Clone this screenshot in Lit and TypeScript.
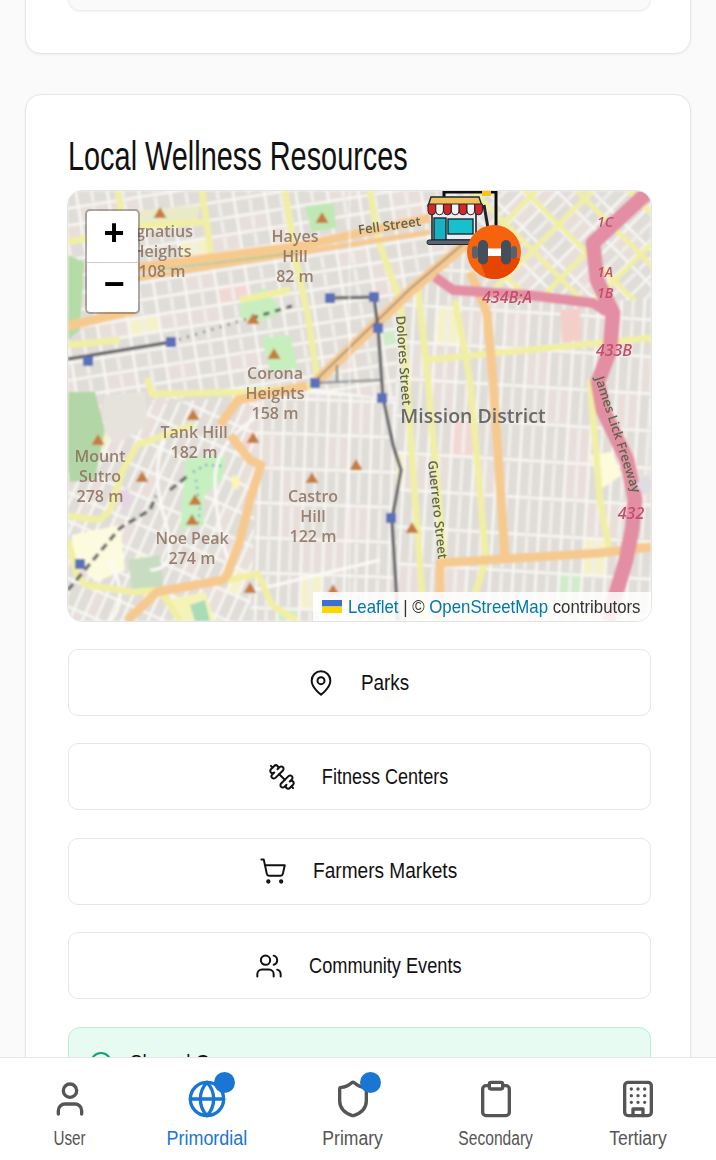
import { LitElement, html, css, svg } from "lit";
import { customElement } from "lit/decorators.js";

const rnd = (i: number) => {
  const v = Math.sin(i * 12.9898) * 43758.5453;
  return v - Math.floor(v);
};

interface Region { id: string; poly: string; ang: number; cx: number; cy: number; w: number; h: number; seed: number; }

const regions: Region[] = [
  { id: "rn", poly: "68,191 436,191 470,240 400,300 395,400 315,388 150,405 68,405", ang: -9, cx: 250, cy: 300, w: 31, h: 17, seed: 11 },
  { id: "rm", poly: "400,300 470,240 490,300 651,300 651,621 398,621 395,400", ang: 3.5, cx: 520, cy: 460, w: 23, h: 37, seed: 73 },
  { id: "re", poly: "436,191 651,191 651,300 490,300 470,240", ang: 45, cx: 540, cy: 245, w: 25, h: 25, seed: 131 },
  { id: "rs", poly: "260,390 395,400 398,621 250,621", ang: 2, cx: 325, cy: 505, w: 22, h: 35, seed: 197 },
  { id: "rw", poly: "68,400 260,390 250,621 68,621", ang: 24, cx: 160, cy: 505, w: 12, h: 26, seed: 241 },
];

const blockFill = (r: number) =>
  r > 0.975 ? "#f2d8d5" : r > 0.955 ? "#f5f1cb" : r > 0.94 ? "#d2ebcb" : r > 0.8 ? "#e8dfdb" : "#e0ddd8";

const gridFor = (g: Region) => {
  const cells = [];
  const nx = Math.ceil(440 / g.w);
  const ny = Math.ceil(440 / g.h);
  for (let i = -nx; i <= nx; i++) {
    for (let j = -ny; j <= ny; j++) {
      const x = g.cx + i * g.w;
      const y = g.cy + j * g.h;
      const r = rnd(i * 31 + j * 7 + g.seed);
      cells.push(svg`<rect x=${x + 1.3} y=${y + 1.3} width=${g.w - 2.6} height=${g.h - 2.6} fill=${blockFill(r)}></rect>`);
      if (g.w > 15) {
        cells.push(svg`<rect x=${x + g.w / 2 - 1.6} y=${y + 2.5} width="3.2" height=${g.h - 5} fill="#f1efeb"></rect>`);
      }
    }
  }
  return svg`<clipPath id=${g.id}><polygon points=${g.poly}></polygon></clipPath>
    <g clip-path=${`url(#${g.id})`}><g transform=${`rotate(${g.ang} ${g.cx} ${g.cy})`}>${cells}</g></g>`;
};

const yellow = [
  "M118 191 L126 250", "M202 191 L212 262", "M285 191 L296 262 L308 316 L318 384",
  "M68 242 L118 232", "M140 226 L205 222", "M240 300 L290 290",
  "M370 191 L378 240 L400 300 L408 400 L424 621",
  "M417 280 L428 380 L444 563", "M455 300 L470 380 L486 560 L466 621",
  "M590 380 L600 500 L610 553", "M425 360 L651 338", "M68 345 L120 340",
  "M147 378 L152 394 L247 392 L312 386",
  "M193 425 L137 445 L123 470 L110 510 L100 520 L68 516",
  "M68 540 L77 575 L86 585 L133 592 L160 590", "M227 580 L258 574 L272 605 L297 621",
  "M160 590 L180 621",
];

const diag = [0, 1, 2, 3, 4, 5];

const orange = [
  "M135 268 L300 246 L430 218", "M68 326 L135 310",
  "M307 386 L238 400 L220 425", "M230 435 L250 460 L261 465 L250 500 L240 540 L227 575 L223 580 L157 592 L127 621",
  "M470 272 L487 313 L493 380 L505 557", "M440 621 L440 563 L600 553 L651 547",
];

const pink = [
  "M647 193 L593 243 L597 280 L613 313 L610 350 L598 382 L603 410 L627 460 L635 500 L632 530 L626 560 L617 590 L608 621",
  "M435 277 L453 290 L527 295 L593 303 L607 312",
];

const stops: [number, number][] = [
  [88, 361], [171, 342], [330, 298], [374, 297], [378, 328], [315, 383], [382, 398], [391, 518], [80, 564],
];

const peaks: [number, number][] = [
  [160, 213], [322, 218], [98, 440], [193, 415], [253, 438], [142, 477], [195, 500], [192, 520],
  [312, 478], [356, 465], [250, 588], [333, 590], [412, 528], [253, 319], [274, 354],
];

const hills: [number, number, string[]][] = [
  [162, 237, ["Ignatius", "Heights", "108 m"]],
  [295, 242, ["Hayes", "Hill", "82 m"]],
  [275, 379, ["Corona", "Heights", "158 m"]],
  [194, 438, ["Tank Hill", "182 m"]],
  [100, 462, ["Mount", "Sutro", "278 m"]],
  [313, 502, ["Castro", "Hill", "122 m"]],
  [192, 544, ["Noe Peak", "274 m"]],
];

const mapArt = svg`
  <rect x="68" y="191" width="583" height="430" fill="#f8f7f3"></rect>
  <g filter="url(#soft)">
    ${regions.map(gridFor)}
    <path d="M68 392 L95 392 L105 430 L95 480 L70 482 L68 470Z" fill="#b3d6a6"></path>
    <path d="M105 395 L145 392 L148 425 L115 445 L104 430Z" fill="#e6e3dc"></path>
    <path d="M68 255 L84 262 L80 330 L68 340Z" fill="#b4dca6"></path>
    <path d="M305 206 L334 203 L336 228 L312 232Z" fill="#bfe8b4"></path>
    <path d="M125 212 L200 205 L196 225 L130 228Z" fill="#e9ebc8"></path>
    <path d="M240 300 L265 288 L283 312 L262 322 L240 318Z" fill="#c8eec0"></path>
    <path d="M262 338 L290 335 L298 368 L270 372Z" fill="#c6efbd"></path>
    <path d="M186 458 L226 456 L222 480 L204 496 L204 525 L180 530 Z" fill="#c6f0c0"></path>
    <path d="M232 475 L240 478 L238 490 L232 488Z" fill="#fdf5b0"></path>
    <path d="M72 535 L120 525 L125 570 L95 582 L72 556Z" fill="#fdfbdf"></path>
    <path d="M128 560 L160 555 L164 590 L132 590Z" fill="#c8dcc2"></path>
    <path d="M165 600 L205 592 L215 621 L180 621Z" fill="#f6f3b8"></path>
    <path d="M190 605 L205 600 L210 621 L195 621Z" fill="#a8dcb8"></path>
    <path d="M118 492 L128 488 L132 505 L122 508Z" fill="#e6d4e6"></path>
    <path d="M590 455 L612 452 L622 475 L600 490Z" fill="#fcfbdc"></path>
    <path d="M560 310 L580 308 L582 340 L562 342Z" fill="#f4cfca"></path>
    <path d="M265 412 Q215 440 215 480 T228 560 M165 440 Q150 470 165 520 T150 570 M110 560 Q130 600 110 621 M255 590 L380 560"
      fill="none" stroke="#faf9f6" stroke-width="3"></path>
    <g clip-path="url(#re)">
      ${diag.map((i) => svg`<path d=${`M${400 + i * 52} 170 L${620 + i * 52} 390`} fill="none" stroke="#f1efa3" stroke-width="5"></path>`)}
      ${diag.map((i) => svg`<path d=${`M${445 + i * 56} 170 L${245 + i * 56} 370`} fill="none" stroke="#f1efa3" stroke-width="5"></path>`)}
    </g>
    ${yellow.map((d) => svg`<path d=${d} fill="none" stroke="#f1efa3" stroke-width="6.5" stroke-linejoin="round"></path>`)}
    ${orange.map((d) => svg`<path d=${d} fill="none" stroke="#f6c98f" stroke-width="9" stroke-linejoin="round"></path>`)}
    <path d="M135 279 L430 232" fill="none" stroke="#f6c98f" stroke-width="5"></path>
    <path d="M160 270 L300 252" fill="none" stroke="#a6c686" stroke-width="1.5"></path>
    <path d="M316 382 L410 291 L470 240" fill="none" stroke="#f6c98f" stroke-width="11"></path>
    <path d="M316 380 L410 289 L470 238" fill="none" stroke="#8a8378" stroke-width="1.6"></path>
    ${pink.map((d, i) => svg`<path d=${d} fill="none" stroke="#e38ea3" stroke-width=${i === 0 ? 15 : 10} stroke-linejoin="round"></path>`)}
    <path d="M640 490 L651 480" stroke="#e0dce4" stroke-width="14"></path>
    <path d="M68 359 L171 342" fill="none" stroke="#55565a" stroke-width="3"></path>
    <path d="M171 342 L250 318" fill="none" stroke="#66676b" stroke-width="3" stroke-dasharray="1.5 7"></path>
    <path d="M252 318 L292 306" fill="none" stroke="#55565a" stroke-width="3" stroke-dasharray="6 6"></path>
    <path d="M330 298 L374 297 L378 328 L383 398 L393 445 L401 470 L392 520 L398 621" fill="none" stroke="#5f6064" stroke-width="3.2" stroke-linejoin="round"></path>
    <path d="M315 383 L380 380 M337 365 L337 383" fill="none" stroke="#85858a" stroke-width="2.2"></path>
    <path d="M68 590 L120 528 L150 510 L156 496 M170 490 L190 474" fill="none" stroke="#66676b" stroke-width="3.4" stroke-dasharray="8 5"></path>
    <path d="M193 472 L206 465 L222 466" fill="none" stroke="#6a80c0" stroke-width="2" stroke-dasharray="2 5"></path>
    <path d="M196 480 L200 510 L198 525" fill="none" stroke="#6a90d0" stroke-width="2" stroke-dasharray="2 5"></path>
    ${stops.map(([x, y]) => svg`<rect x=${x - 5} y=${y - 5} width="10" height="10" fill="#5a70b8"></rect>`)}
    ${peaks.map(([x, y]) => svg`<path d=${`M${x} ${y - 6} L${x + 6.5} ${y + 5} L${x - 6.5} ${y + 5}Z`} fill="#c67b3e"></path>`)}
    <rect x="349" y="191" width="1" height="430" fill="#fff" opacity="0.8"></rect>
  </g>
  <g filter="url(#softer)">
    ${hills.map(([x, y0, lines]) => svg`${lines.map((t, n) => svg`<text x=${x} y=${y0 + n * 20} text-anchor="middle" class="hill">${t}</text>`)}`)}
    <text x="473" y="423" text-anchor="middle" class="district">Mission District</text>
    <text transform="translate(390 230) rotate(-8)" text-anchor="middle" class="road">Fell Street</text>
    <text transform="translate(396 316) rotate(86)" class="road">Dolores Street</text>
    <text transform="translate(428 461) rotate(84)" class="road">Guerrero Street</text>
    <text transform="translate(595 378) rotate(72)" class="road">James Lick Freeway</text>
    <text x="507" y="303" text-anchor="middle" class="exit">434B;A</text>
    <text x="597" y="227" class="exit small">1C</text>
    <text x="597" y="277" class="exit small">1A</text>
    <text x="597" y="298" class="exit small">1B</text>
    <text x="614" y="356" text-anchor="middle" class="exit">433B</text>
    <text x="631" y="519" text-anchor="middle" class="exit">432</text>
  </g>
  <g filter="url(#softer)">
    <path d="M444 225 V192 H496 V232" fill="none" stroke="#111" stroke-width="3"></path>
    <rect x="482" y="191" width="9" height="5" fill="#f5c518"></rect>
    <path d="M484 205 L488 228 H486" fill="none" stroke="#222" stroke-width="3"></path>
    <rect x="432" y="210" width="44" height="30" fill="#e9eef2" stroke="#1d2730" stroke-width="1.6"></rect>
    <rect x="434" y="218" width="12" height="22" fill="#14b3c4" stroke="#1d2730" stroke-width="1.4"></rect>
    <rect x="448" y="219" width="25" height="15" fill="#14c0cc" stroke="#1d2730" stroke-width="1.4"></rect>
    <rect x="427" y="240" width="55" height="4.5" rx="2" fill="#5b6470" stroke="#1d2730" stroke-width="1"></rect>
    <path d="M431 197 H479 L482 206 H428Z" fill="#f2c15c" stroke="#1d2730" stroke-width="1.4"></path>
    ${[0, 1, 2, 3, 4, 5, 6].map((i) => svg`<path d=${`M${428 + i * 7.8} 204 h7.6 v7 a3.8 3.8 0 0 1 -7.6 0z`} fill=${i % 2 ? "#f6f3ee" : "#d7262b"} stroke="#1d2730" stroke-width="1"></path>`)}
    <circle cx="494" cy="252" r="27" fill="#f7640f"></circle>
    <path d="M478 256 H512 L520 259 A27 27 0 0 1 494 279 A27 27 0 0 1 486 277.5Z" fill="#e64400"></path>
    <rect x="474" y="248.5" width="42" height="7.5" rx="1" fill="#fff"></rect>
    <rect x="478" y="240" width="10" height="24.5" rx="5" fill="#454f5b"></rect>
    <rect x="501" y="240" width="10" height="24.5" rx="5" fill="#454f5b"></rect>
    <rect x="472" y="246" width="6" height="12.5" rx="3" fill="#57626e"></rect>
    <rect x="511" y="246" width="6" height="12.5" rx="3" fill="#57626e"></rect>
  </g>
`;

const navItems = [
  { label: "User", w: 40, tw: 32, s: 0.78, active: false, badge: false, icon: svg`<path d="M19 21v-2a4 4 0 0 0-4-4H9a4 4 0 0 0-4 4v2"></path><circle cx="12" cy="7" r="4"></circle>` },
  { label: "Primordial", w: 81, tw: 81, s: 0.92, active: true, badge: true, icon: svg`<circle cx="12" cy="12" r="10"></circle><path d="M12 2a14.5 14.5 0 0 0 0 20 14.5 14.5 0 0 0 0-20"></path><path d="M2 12h20"></path>` },
  { label: "Primary", w: 60, tw: 60, s: 0.9, active: false, badge: true, icon: svg`<path d="M20 13c0 5-3.5 7.5-7.66 8.95a1 1 0 0 1-.67-.01C7.5 20.5 4 18 4 13V6a1 1 0 0 1 1-1c2 0 4.5-1.2 6.24-2.72a1.17 1.17 0 0 1 1.52 0C14.51 3.81 17 5 19 5a1 1 0 0 1 1 1z"></path>` },
  { label: "Secondary", w: 74, tw: 74, s: 0.8, active: false, badge: false, icon: svg`<rect x="8" y="2" width="8" height="4" rx="1"></rect><path d="M16 4h2a2 2 0 0 1 2 2v14a2 2 0 0 1-2 2H6a2 2 0 0 1-2-2V6a2 2 0 0 1 2-2h2"></path>` },
  { label: "Tertiary", w: 58, tw: 58, s: 0.9, active: false, badge: false, icon: svg`<rect x="4" y="2" width="16" height="20" rx="2"></rect><path d="M9 22v-4h6v4"></path><path d="M8 6h.01M12 6h.01M16 6h.01M8 10h.01M12 10h.01M16 10h.01M8 14h.01M12 14h.01M16 14h.01"></path>` },
];

const resources = [
  { label: "Parks", tw: 48, s: 0.857, icon: svg`<path d="M20 10c0 6-8 12-8 12s-8-6-8-12a8 8 0 0 1 16 0Z"></path><circle cx="12" cy="10" r="3"></circle>` },
  { label: "Fitness Centers", tw: 126, s: 0.82, icon: svg`<path d="M14.4 14.4 9.6 9.6"></path><path d="M18.657 21.485a2 2 0 1 1-2.829-2.828l-1.767 1.768a2 2 0 1 1-2.829-2.829l6.364-6.364a2 2 0 1 1 2.829 2.829l-1.768 1.767a2 2 0 1 1 2.828 2.829z"></path><path d="m21.5 21.5-1.4-1.4"></path><path d="M3.9 3.9 2.5 2.5"></path><path d="M6.404 12.768a2 2 0 1 1-2.829-2.829l1.768-1.767a2 2 0 1 1-2.828-2.829l2.828-2.828a2 2 0 1 1 2.829 2.828l1.767-1.768a2 2 0 1 1 2.829 2.829z"></path>` },
  { label: "Farmers Markets", tw: 144, s: 0.867, icon: svg`<circle cx="8" cy="21" r="1"></circle><circle cx="19" cy="21" r="1"></circle><path d="M2.05 2.05h2l2.66 12.42a2 2 0 0 0 2 1.58h9.78a2 2 0 0 0 1.95-1.57l1.65-7.43H5.12"></path>` },
  { label: "Community Events", tw: 152, s: 0.826, icon: svg`<path d="M16 21v-2a4 4 0 0 0-4-4H6a4 4 0 0 0-4 4v2"></path><circle cx="9" cy="7" r="4"></circle><path d="M22 21v-2a4 4 0 0 0-3-3.87"></path><path d="M16 3.13a4 4 0 0 1 0 7.75"></path>` },
];

@customElement("app-root")
export class AppRoot extends LitElement {
  static styles = css`
    :host {
      display: block;
      position: relative;
      height: 1160px;
      overflow: hidden;
      background: #fafafa;
      color: #111;
      font-family: "Liberation Sans", sans-serif;
    }
    .page { display: flex; flex-direction: column; gap: 40px; margin-top: -62px; padding: 0 25px; }
    .card {
      background: #fff;
      border: 1px solid #e6e6e6;
      border-radius: 16px;
      box-shadow: 0 1px 3px rgba(0, 0, 0, 0.05);
      padding: 41px 39px 42px 42px;
    }
    .inner {
      height: 29px;
      background: #fafafa;
      border: 1px solid #eee;
      border-radius: 12px;
      box-shadow: 0 1px 2px rgba(0, 0, 0, 0.05);
    }
    h2 {
      font-size: 40px;
      font-weight: 400;
      line-height: 40px;
      margin: 0 0 15px;
      white-space: nowrap;
      transform: scaleX(0.722);
      transform-origin: left center;
    }
    .fit { display: inline-flex; justify-content: center; flex: none; }
    .fit > span { flex: none; white-space: nowrap; }
    .map {
      position: relative;
      height: 430px;
      border-radius: 14px;
      overflow: hidden;
      outline: 1px solid #e3e3e3;
      margin-bottom: 28px;
    }
    .map > svg { display: block; width: 100%; height: 100%; }
    .hill { font: 600 16px "Open Sans", sans-serif; fill: #8b6f5d; opacity: 0.85; }
    .district { font: 600 19.5px "Open Sans", sans-serif; fill: #6a6a6a; }
    .road { font: 600 13px "Open Sans", sans-serif; fill: #5f6650; }
    .exit { font: italic 600 16px "Open Sans", sans-serif; fill: #c2506b; }
    .small { font-size: 14px; }
    .zoom {
      position: absolute;
      left: 17px;
      top: 18px;
      width: 51px;
      border: 2px solid rgba(0, 0, 0, 0.28);
      border-radius: 5px;
      background: #fff;
      background-clip: padding-box;
    }
    .zoom div {
      box-sizing: border-box;
      height: 50.5px;
      padding: 0 0 7px 3px;
      display: flex;
      align-items: center;
      justify-content: center;
      font: 700 36px "Liberation Sans", sans-serif;
      color: #000;
    }
    .zoom div + div { border-top: 1px solid #ccc; }
    .attr {
      position: absolute;
      right: 0;
      bottom: 0;
      width: 338px;
      box-sizing: border-box;
      height: 29px;
      padding: 0 11px 0 9px;
      display: flex;
      align-items: center;
      justify-content: space-between;
      background: rgba(255, 255, 255, 0.85);
      font-size: 19px;
      color: #333;
    }
    .flag { width: 20px; height: 13px; flex: none; }
    .attr a { color: #0078a8; text-decoration: none; }
    .list { display: flex; flex-direction: column; gap: 27.4px; }
    .btn {
      height: 67px;
      box-sizing: border-box;
      border: 1px solid #e6e6e6;
      border-radius: 10px;
      background: #fff;
      display: flex;
      align-items: center;
      justify-content: center;
      gap: 27px;
      padding-right: 3px;
      font-size: 22px;
      color: #111;
    }
    .btn svg { width: 28px; height: 28px; fill: none; stroke: #111; stroke-width: 1.7; stroke-linecap: round; stroke-linejoin: round; flex: none; }
    .note {
      margin-top: 28px;
      height: 120px;
      box-sizing: border-box;
      border: 1px solid #b9eedb;
      border-radius: 12px;
      background: #e8fbf3;
      padding: 19px 20px;
      display: flex;
      align-items: flex-start;
      gap: 17px;
      font-size: 22px;
    }
    .note svg { width: 24px; height: 24px; fill: none; stroke: #10a37a; stroke-width: 2; flex: none; margin-top: 4px; }
    .note span { padding-top: 3px; transform: scaleX(0.85); transform-origin: left center; white-space: nowrap; }
    nav {
      position: absolute;
      left: 0;
      right: 0;
      bottom: 0;
      height: 103px;
      box-sizing: border-box;
      background: #fff;
      border-top: 1px solid #e6e6e6;
      display: flex;
      justify-content: space-between;
      padding: 21px 49px 0 50px;
    }
    .item {
      position: relative;
      display: flex;
      flex-direction: column;
      align-items: center;
      gap: 7px;
      color: #555;
      font-size: 19.5px;
      line-height: 24px;
    }
    .item.on { color: #1976d2; }
    .item svg { width: 40px; height: 40px; fill: none; stroke: currentColor; stroke-width: 2; stroke-linecap: round; stroke-linejoin: round; }
    .dot {
      position: absolute;
      top: -7px;
      left: 50%;
      margin-left: 7px;
      width: 21px;
      height: 21px;
      border-radius: 50%;
      background: #1976d2;
    }
  `;

  private fit(label: string, tw: number, s: number) {
    return html`<span class="fit" style="width:${tw}px"><span style="transform:scaleX(${s})">${label}</span></span>`;
  }

  render() {
    return html`
      <div class="page">
        <section class="card"><div class="inner"></div></section>
        <section class="card">
          <h2>Local Wellness Resources</h2>
          <div class="map">
            <svg viewBox="68 191 583 430" preserveAspectRatio="none">
              <defs>
                <filter id="soft" x="0" y="0" width="100%" height="100%"><feGaussianBlur stdDeviation="0.85"></feGaussianBlur></filter>
                <filter id="softer" x="-5%" y="-5%" width="110%" height="110%"><feGaussianBlur stdDeviation="0.45"></feGaussianBlur></filter>
              </defs>
              ${mapArt}
            </svg>
            <div class="zoom"><div>+</div><div>−</div></div>
            <div class="attr">
              <svg class="flag" viewBox="0 0 20 13"><rect width="20" height="6.5" fill="#3b6fd0"></rect><rect y="6.5" width="20" height="6.5" fill="#ffd500"></rect></svg>
              <span class="fit" style="width:292px"><span style="transform:scaleX(0.885)"><a>Leaflet</a> | © <a>OpenStreetMap</a> contributors</span></span>
            </div>
          </div>
          <div class="list">
            ${resources.map((r) => html`<div class="btn"><svg viewBox="0 0 24 24">${r.icon}</svg>${this.fit(r.label, r.tw, r.s)}</div>`)}
          </div>
          <div class="note">
            <svg viewBox="0 0 24 24"><circle cx="12" cy="12" r="10"></circle></svg>
            <span>Shared Groups</span>
          </div>
        </section>
      </div>
      <nav>
        ${navItems.map(
          (n) => html`<div class="item ${n.active ? "on" : ""}" style="width:${n.w}px">
            <svg viewBox="0 0 24 24">${n.icon}</svg>
            ${n.badge ? html`<span class="dot"></span>` : ""}
            ${this.fit(n.label, n.tw, n.s)}
          </div>`
        )}
      </nav>
    `;
  }
}
